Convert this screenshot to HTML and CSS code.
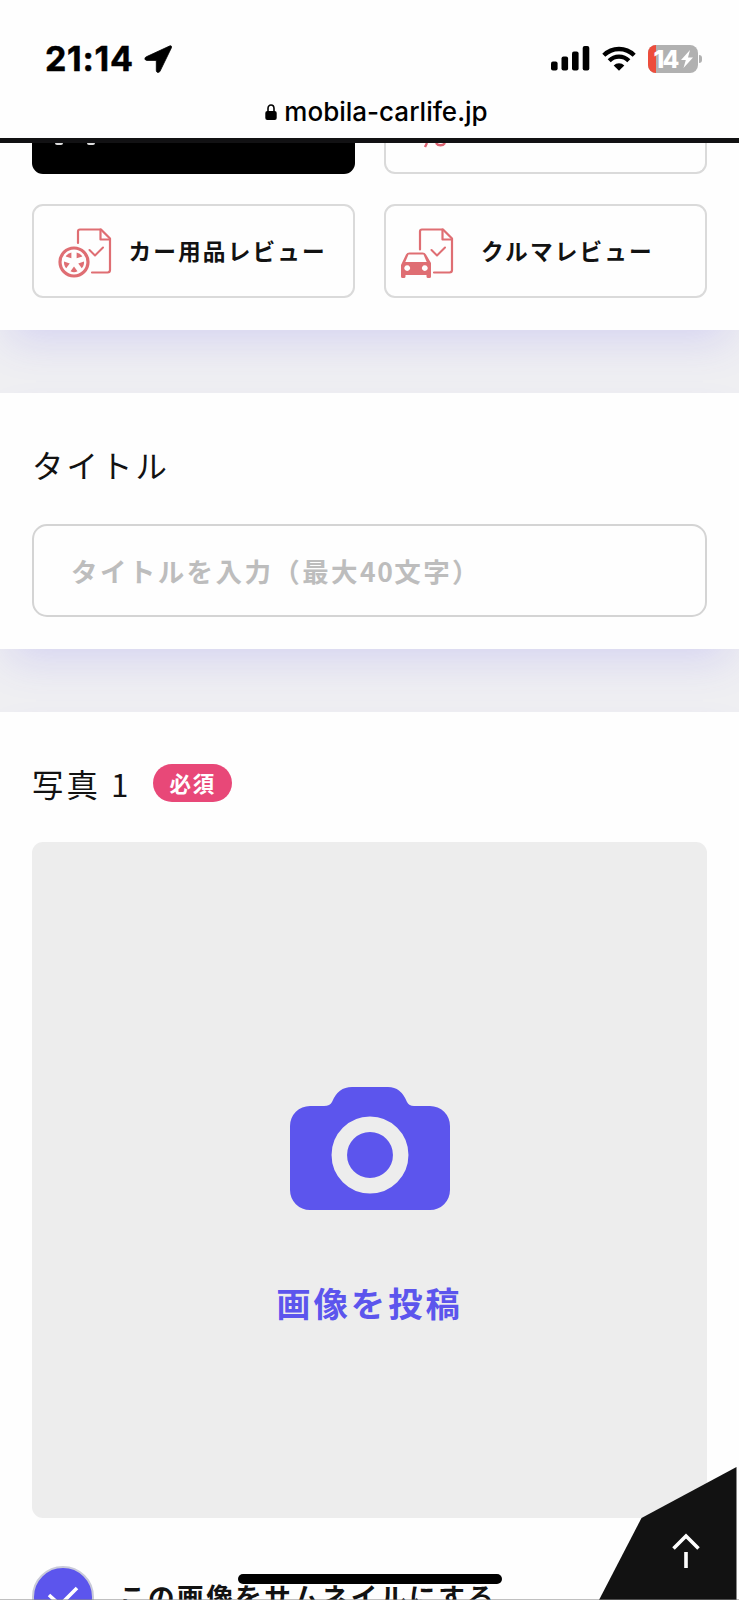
FILE: index.html
```html
<!DOCTYPE html>
<html lang="ja">
<head>
<meta charset="utf-8">
<title>mobila-carlife.jp</title>
<link rel="stylesheet" href="styles.css">
</head>
<body>
<div class="screen">
  <header class="browser">
    <div class="status">
      <div class="clock"><span>21:14</span>
        <svg class="loc" viewBox="0 0 28 28"><path d="M25.6 1 2.3 11.8C.2 12.8.6 15.4 3 15.400h9.300v10c0 2.400 2.800 2.800 3.800.7L27.400 2.800C28 1.300 27 .4 25.600 1Z" stroke="#000" stroke-width=".8"/></svg>
      </div>
      <div class="indicators">
        <svg class="signal" viewBox="0 0 39 25"><rect x="0" y="15.500" width="6.600" height="9" rx="2"/><rect x="10.500" y="10.500" width="6.600" height="14" rx="2"/><rect x="21" y="5.500" width="6.600" height="19" rx="2"/><rect x="31.700" y="0" width="6.600" height="24.500" rx="2"/></svg>
        <svg class="wifi" viewBox="0 0 34 25"><g fill="none" stroke="#000" stroke-width="4.300"><path d="M1.800 9.300a21.500 21.500 0 0 1 30.400 0"/><path d="M7.200 14.700a13.900 13.900 0 0 1 19.600 0"/></g><path d="M17 24.700 11.700 19.400a7.500 7.500 0 0 1 10.600 0Z"/></svg>
        <div class="battery"><span class="level"></span><span class="percent">14</span>
          <svg class="bolt" viewBox="0 0 12 18"><path d="M9 0 0 10h4.800L2.500 18 12 7.400H7Z"/></svg>
        </div><span class="cap"></span>
      </div>
    </div>
    <div class="address">
      <svg class="lock" viewBox="0 0 12 16"><path d="M3 8V4.500a3 3.500 0 0 1 6 0V8" fill="none" stroke="#000" stroke-width="1.600"/><rect x=".3" y="7" width="11.400" height="9" rx="2"/></svg>
      <span>mobila-carlife.jp</span>
    </div>
  </header>

  <main>
    <section class="panel categories">
      <div class="card active"><span class="trace"></span><span class="trace"></span></div>
      <div class="card cut">
        <svg viewBox="0 0 30 5"><path d="M8 0 6 4M17 0c2 3 7 3 9 0" fill="none" stroke="#dc6472" stroke-width="2.400"/></svg>
      </div>
      <div class="card goods">
        <svg class="icon" viewBox="0 0 54 50">
          <g fill="none" stroke="#df6e73" stroke-width="2.200" stroke-linejoin="round" stroke-linecap="round"><path d="M20 15V3.500Q20 1.500 22 1.500H43L52 10.500V42Q52 44.500 49.500 44.500H34"/><path d="M42.500 1.500V11.500H52"/><path d="M31.500 22l5.500 5.500 8-8" stroke-width="2"/></g>
          <circle cx="16" cy="34" r="14" fill="none" stroke="#df6e73" stroke-width="3.200"/>
          <g fill="#df6e73" transform="translate(16 34)"><path id="vent" d="M0 4.500 3.500 9.300Q0 11 -3.500 9.300Z"/><use href="#vent" transform="rotate(72)"/><use href="#vent" transform="rotate(144)"/><use href="#vent" transform="rotate(216)"/><use href="#vent" transform="rotate(288)"/></g>
        </svg>
        <span>カー用品レビュー</span>
      </div>
      <div class="card car">
        <svg class="icon" viewBox="0 0 54 50">
          <g fill="none" stroke="#df6e73" stroke-width="2.200" stroke-linejoin="round" stroke-linecap="round"><path d="M20 21.500V3.500Q20 1.500 22 1.500H43L52 10.500V42Q52 44.500 49.500 44.500H34"/><path d="M42.500 1.500V11.500H52"/><path d="M31.500 22l5.500 5.500 8-8" stroke-width="2"/></g>
          <path fill="#df6e73" fill-rule="evenodd" d="M1 37 6 26.500Q7 24.500 9.500 24.500H22.500Q25 24.500 26 26.500L31 35V48.500Q31 50 29.500 50H28Q26.500 50 26.500 48.500V47H5.500V48.500Q5.500 50 4 50H2.500Q1 50 1 48.500ZM8.500 26.500 5.300 34H26.700L23.500 26.500ZM7.200 37.200a2.900 2.900 0 1 0 .01 0ZM24.800 37.200a2.900 2.900 0 1 0 .01 0Z"/>
        </svg>
        <span>クルマレビュー</span>
      </div>
    </section>

    <section class="panel title-panel">
      <h2>タイトル</h2>
      <div class="field">タイトルを入力（最大<span class="count">40</span>文字）</div>
    </section>

    <section class="panel photo-panel">
      <h2>写真 1<span class="required">必須</span></h2>
      <div class="upload">
        <svg class="camera" viewBox="0 0 160 124"><path fill="#5c55ed" d="M20 19H34Q40 19 42 15 48 0 62 0H98Q111 0 117 15 119 19 124 19H140A20 20 0 0 1 160 39V103A20 20 0 0 1 140 123H20A20 20 0 0 1 0 103V39A20 20 0 0 1 20 19Z"/><circle cx="80" cy="68" r="30.700" fill="none" stroke="#ededed" stroke-width="15.500"/></svg>
        <span>画像を投稿</span>
      </div>
      <div class="thumbnail">
        <span class="check"><svg viewBox="0 0 32 24"><path d="M2 10 13 20 30 3" fill="none" stroke="#fff" stroke-width="3.600"/></svg></span>
        <span class="thumb-label">この画像をサムネイルにする</span>
      </div>
    </section>
  </main>
  <svg class="to-top" viewBox="0 0 138 133"><path d="M0 133 42.500 51 137.500 0V133Z" fill="#121212"/><path d="M74.500 81.500 87 69 99.500 81.500M87 85V101" fill="none" stroke="#fff" stroke-width="3.600"/></svg>
  <div class="home-bar"></div>
  <div class="edge"></div>
</div>
</body>
</html>
```
FILE: styles.css
```css
* { box-sizing: border-box; }
body { margin: 0; background: #efeff2; color: #121212; font-family: "Noto Sans CJK JP", sans-serif; }
.screen { position: relative; width: 739px; height: 1600px; overflow: hidden; }
svg { display: block; flex: none; }

.browser { height: 143px; background: #fefefe; border-bottom: 5px solid #121212; color: #000; font-family: Inter, sans-serif; }
.status { display: flex; justify-content: space-between; height: 92px; padding: 25px 37px 0 45px; }
.clock { display: flex; align-items: center; height: 67px; font-size: 34px; font-weight: 700; letter-spacing: .7px; -webkit-text-stroke: .5px #000; }
.loc { width: 28px; height: 28px; margin-left: 10px; }
.indicators { display: flex; align-items: center; height: 67px; }
.signal { width: 39px; height: 25px; }
.wifi { width: 34px; height: 25px; margin-left: 11.500px; }
.battery { display: flex; align-items: center; position: relative; width: 50px; height: 28px; margin-left: 12px; overflow: hidden; border-radius: 8px; background: #b1b1b1; }
.level { width: 8px; height: 28px; background: #ed4d3c; }
.percent { width: 25px; margin-left: -2px; color: #fff; font-size: 24.500px; font-weight: 800; letter-spacing: -1.800px; line-height: 28px; }
.bolt { width: 12px; height: 18px; margin-left: 2px; fill: #fff; }
.cap { width: 3px; height: 8px; margin-left: 1.500px; border-radius: 0 4px 4px 0; background: #b1b1b1; }
.address { display: flex; justify-content: center; align-items: center; height: 39px; padding-left: 12px; font-size: 26px; font-weight: 500; line-height: 39px; }
.lock { width: 12px; height: 16px; margin: 1px 7px 0 2px; }

.panel { padding: 0 32px; background: #fefefe; box-shadow: 0 20px 40px -10px #5c55ed2e; }
.categories { display: grid; grid-template-columns: 323px 323px; grid-template-rows: 31px 94px; justify-content: space-between; row-gap: 30px; height: 187px; }
.card { display: flex; align-items: center; border: 2px solid #dadada; border-radius: 11px; font-size: 22.700px; font-weight: 700; letter-spacing: 2.100px; line-height: 32px; white-space: nowrap; }
.card span { margin-top: -1px; }
.card.active { align-items: flex-start; gap: 24px; padding-left: 23px; background: #000; border: 0; border-radius: 0 0 11px 11px; }
.card .trace { width: 8px; height: 1.500px; margin: 0; border-radius: 0 0 4px 4px; background: #ddd; }
.card.cut { align-items: flex-start; border-top: 0; border-radius: 0 0 11px 11px; padding-left: 33px; }
.cut svg { width: 30px; height: 5px; }
.icon { width: 54px; height: 50px; margin-top: 4px; }
.goods { gap: 17px; padding-left: 23.500px; }
.car { gap: 27px; padding-left: 14px; }

h2 { display: flex; align-items: center; margin: 0; font-size: 31.400px; font-weight: 400; letter-spacing: 3.100px; line-height: 46px; }
.title-panel { height: 256px; margin-top: 63px; padding-top: 49px; }
.field { height: 93px; margin-top: 36px; padding-left: 37px; border: 2px solid #d4d4d4; border-radius: 15px; color: #bdbdbd; font-size: 26.500px; font-weight: 700; letter-spacing: 2.400px; line-height: 89px; }
.count { letter-spacing: 1.500px; }

.photo-panel { height: 888px; margin-top: 63px; padding-top: 49px; }
.required { width: 79px; height: 38px; margin: -3px 0 0 21.500px; border-radius: 19px; background: #e84878; color: #fff; font-size: 21.500px; font-weight: 700; letter-spacing: 1.600px; line-height: 38px; text-align: center; }
.upload { display: flex; flex-direction: column; align-items: center; height: 676px; margin-top: 35px; padding-top: 245px; border-radius: 11px; background: #ededed; color: #5c55ed; font-size: 34.400px; font-weight: 700; letter-spacing: 2.900px; line-height: 50px; }
.camera { width: 160px; height: 124px; margin-bottom: 66px; }
.thumbnail { display: flex; align-items: center; gap: 25px; margin-top: 48px; }
.check { display: flex; justify-content: center; align-items: center; width: 62px; height: 62px; border: 2px solid #c9cad9; border-radius: 50%; background: #5c55ed; }
.check svg { width: 32px; height: 24px; }
.thumb-label { margin-top: -3px; font-size: 26.600px; font-weight: 700; letter-spacing: 2.450px; line-height: 38px; white-space: nowrap; }

.to-top { position: absolute; right: 2px; bottom: 0; width: 138px; height: 133px; }
.home-bar { position: absolute; left: 238px; top: 1574px; width: 264px; height: 10px; border-radius: 5px; background: #000; }
.edge { position: absolute; left: 0; right: 0; bottom: 0; height: 1px; background: #8888; }
```
